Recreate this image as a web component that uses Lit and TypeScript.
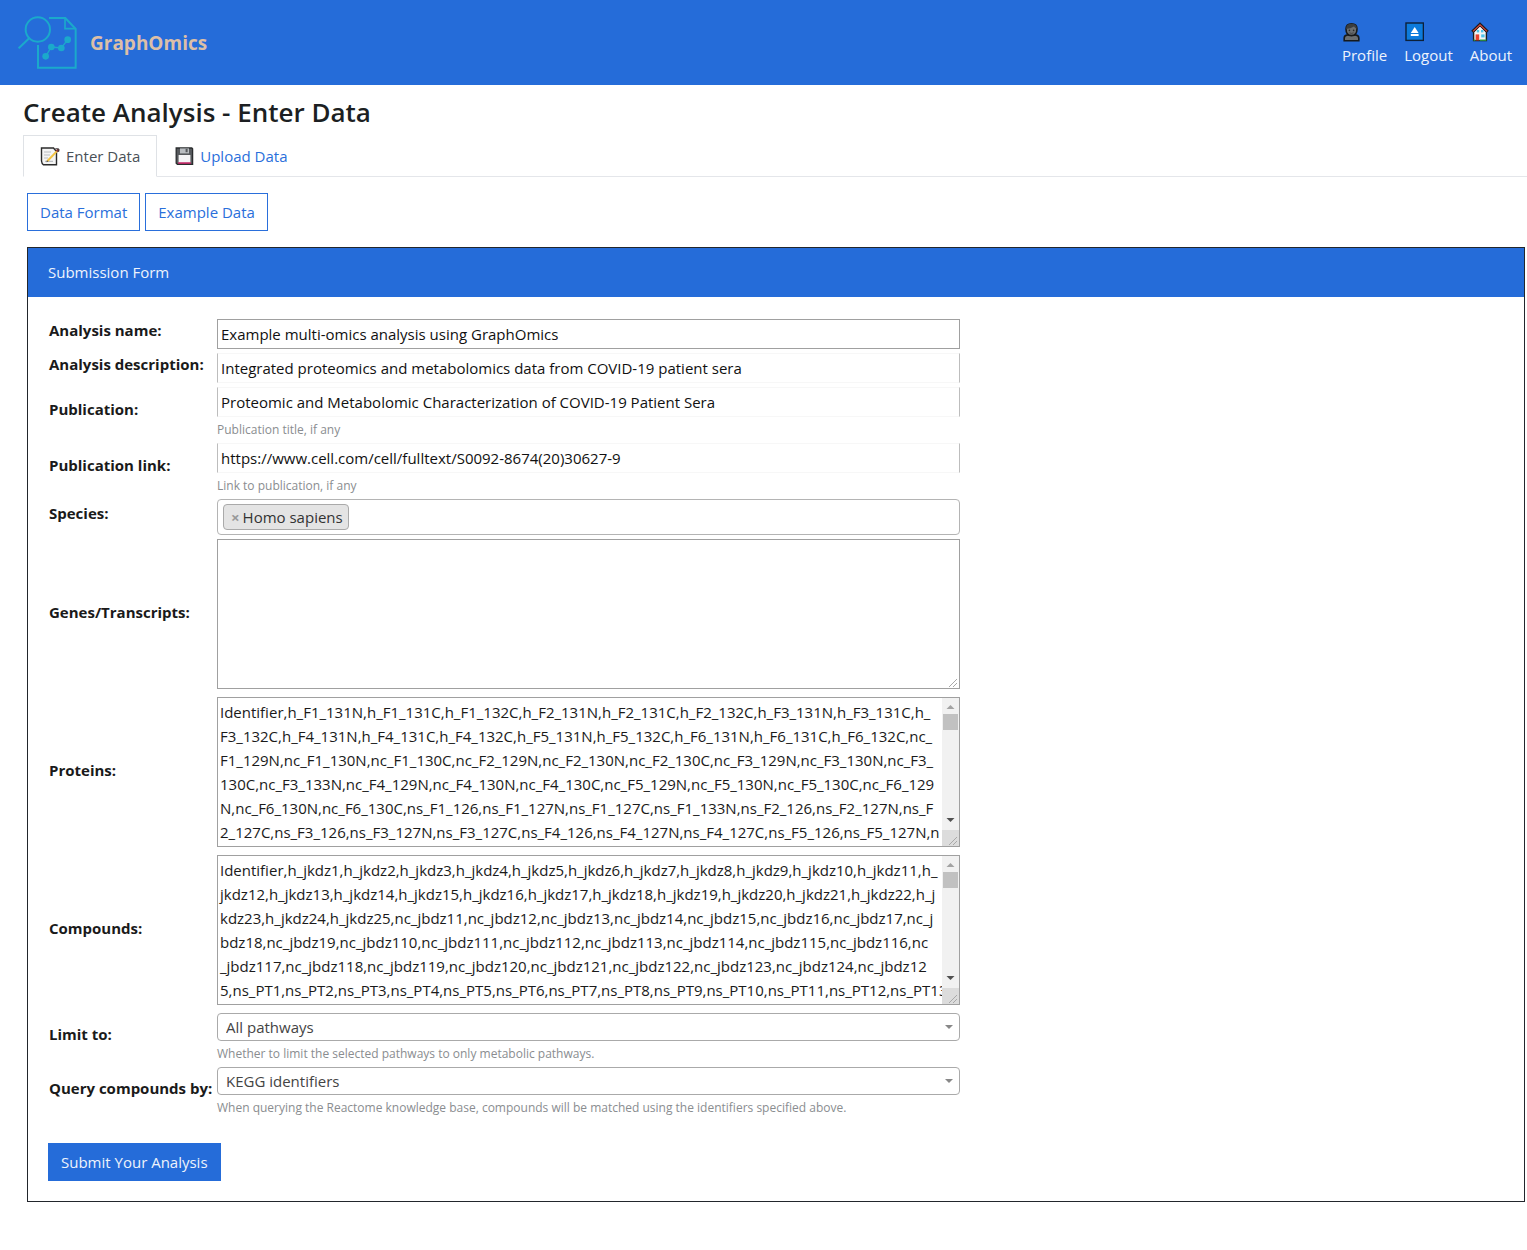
import { LitElement, html, svg, css, nothing } from "lit";
import { customElement, property } from "lit/decorators.js";

const PROTEINS = [
  "Identifier,h_F1_131N,h_F1_131C,h_F1_132C,h_F2_131N,h_F2_131C,h_F2_132C,h_F3_131N,h_F3_131C,h_",
  "F3_132C,h_F4_131N,h_F4_131C,h_F4_132C,h_F5_131N,h_F5_132C,h_F6_131N,h_F6_131C,h_F6_132C,nc_",
  "F1_129N,nc_F1_130N,nc_F1_130C,nc_F2_129N,nc_F2_130N,nc_F2_130C,nc_F3_129N,nc_F3_130N,nc_F3_",
  "130C,nc_F3_133N,nc_F4_129N,nc_F4_130N,nc_F4_130C,nc_F5_129N,nc_F5_130N,nc_F5_130C,nc_F6_129",
  "N,nc_F6_130N,nc_F6_130C,ns_F1_126,ns_F1_127N,ns_F1_127C,ns_F1_133N,ns_F2_126,ns_F2_127N,ns_F",
  "2_127C,ns_F3_126,ns_F3_127N,ns_F3_127C,ns_F4_126,ns_F4_127N,ns_F4_127C,ns_F5_126,ns_F5_127N,n",
].join("\n");

const COMPOUNDS = [
  "Identifier,h_jkdz1,h_jkdz2,h_jkdz3,h_jkdz4,h_jkdz5,h_jkdz6,h_jkdz7,h_jkdz8,h_jkdz9,h_jkdz10,h_jkdz11,h_",
  "jkdz12,h_jkdz13,h_jkdz14,h_jkdz15,h_jkdz16,h_jkdz17,h_jkdz18,h_jkdz19,h_jkdz20,h_jkdz21,h_jkdz22,h_j",
  "kdz23,h_jkdz24,h_jkdz25,nc_jbdz11,nc_jbdz12,nc_jbdz13,nc_jbdz14,nc_jbdz15,nc_jbdz16,nc_jbdz17,nc_j",
  "bdz18,nc_jbdz19,nc_jbdz110,nc_jbdz111,nc_jbdz112,nc_jbdz113,nc_jbdz114,nc_jbdz115,nc_jbdz116,nc",
  "_jbdz117,nc_jbdz118,nc_jbdz119,nc_jbdz120,nc_jbdz121,nc_jbdz122,nc_jbdz123,nc_jbdz124,nc_jbdz12",
  "5,ns_PT1,ns_PT2,ns_PT3,ns_PT4,ns_PT5,ns_PT6,ns_PT7,ns_PT8,ns_PT9,ns_PT10,ns_PT11,ns_PT12,ns_PT13",
].join("\n");

const grip = svg`<path d="M7 15 L15 7 M11 15 L15 11" stroke="#a8a8a8" stroke-width="1" fill="none"/>`;

const icons = {
  profile: html`<svg class="icon" viewBox="0 0 20 20" aria-hidden="true">
    <path d="M2.2 18.8 V16 Q2.200 13.200 5.600 13 H13.400 Q16.800 13.200 16.800 16 V18.800 Z" fill="#6b6e70" stroke="#17191b" stroke-width="1.6"/>
    <path d="M4 7 Q4 1.800 9.500 1.800 Q15 1.800 15 7 Q15 13.600 9.500 13.600 Q4 13.600 4 7 Z" fill="#6b6e70" stroke="#17191b" stroke-width="1.6"/>
    <path d="M4 7 Q4 1.800 9.500 1.800 Q15 1.800 15 7 Q12.800 6 12 4.600 Q8.500 6.800 4 7 Z" fill="#3a3d3f"/>
    <circle cx="7.400" cy="8.400" r="0.8" fill="#2a2a2a"/><circle cx="11.600" cy="8.400" r="0.8" fill="#2a2a2a"/>
    <path d="M7.400 10.800 Q9.500 12 11.600 10.800" stroke="#3c3c3c" stroke-width="0.8" fill="none"/>
  </svg>`,
  logout: html`<svg class="icon" viewBox="0 0 20 20" aria-hidden="true">
    <rect x="2" y="1" width="17.400" height="17.400" fill="#0c7bdc" stroke="#0d2038" stroke-width="1.4"/>
    <path d="M10.700 5 L14.600 11 H6.800 Z" fill="#fff"/><rect x="6.800" y="12" width="7.800" height="2" fill="#fff"/>
  </svg>`,
  home: html`<svg class="icon" viewBox="0 0 20 20" aria-hidden="true">
    <path d="M3.600 18.600 V10 L10 3.600 L16.400 10 V18.600 Z" fill="#f3f5f5" stroke="#1c1c1c" stroke-width="1.4"/>
    <path d="M2.200 9.800 L10 2.200 L17.800 9.800" fill="none" stroke="#1c1c1c" stroke-width="2.800"/>
    <path d="M3 9.400 L10 2.800 L17 9.400" fill="none" stroke="#d8453a" stroke-width="1.3"/>
    <rect x="5.600" y="12.400" width="3.600" height="6" fill="#e8412f"/>
    <rect x="11.200" y="12.400" width="3.400" height="3" fill="#4cc3ea"/>
    <rect x="6.800" y="8" width="2.400" height="2.400" fill="#4cc3ea"/><rect x="11" y="8" width="2.400" height="2.400" fill="#4cc3ea"/>
    <path d="M3.600 18.200 H5.400 M9.600 18.200 H16.400" stroke="#2fa84a" stroke-width="1.2"/>
  </svg>`,
  memo: html`<svg class="icon" viewBox="0 0 20 20" aria-hidden="true">
    <path d="M1.500 2 H13.500 L16.500 5.500 V18.800 H3.500 Q1.800 18 1.500 15 Z" fill="#f4f4f4" stroke="#2b2b2b" stroke-width="1.4"/>
    <path d="M4 6 H11 M4 9 H10 M4 12 H8 M5 15.400 H13" stroke="#b9bcc0" stroke-width="1.1"/>
    <path d="M7.200 15.200 L17.400 4.600" stroke="#f3c343" stroke-width="2"/>
    <path d="M6.400 16.200 L8.400 15.600 L7 14.200 Z" fill="#555"/>
    <path d="M16.600 5.400 L18.600 3.400" stroke="#8b3438" stroke-width="2.400"/>
    <path d="M15.400 2.600 L19 3 L18.600 6" stroke="#2b2b2b" fill="none" stroke-width="0.9"/>
  </svg>`,
  floppy: html`<svg class="icon" viewBox="0 0 20 20" aria-hidden="true">
    <path d="M2.200 2 H17.800 L18.600 2.800 V18.400 H3.400 L2.200 17.200 Z" fill="#56595d" stroke="#2a2c2e" stroke-width="1.3"/>
    <rect x="6" y="2.400" width="9" height="5" fill="#b9bdc1"/><rect x="11.600" y="2.800" width="2" height="3.400" fill="#55585c"/>
    <rect x="4.600" y="9" width="11.800" height="7.600" fill="#f4f4f6"/><rect x="4.200" y="16.400" width="12.600" height="1.300" fill="#e01b6a"/>
  </svg>`,
  logo: html`<svg class="logo" viewBox="54 51 180 159" aria-hidden="true">
    <g fill="none" stroke="#1ba9cb" stroke-width="6">
      <circle cx="113.500" cy="91.500" r="36.500"/>
      <path d="M89 116 L56 148"/>
      <path d="M147 57 H196 L227 90 V206 H114 V138"/>
      <path d="M195 58 V89 H227" stroke-width="5"/>
      <path d="M137 172 L154 144 L184 147 L203 122" stroke-width="4"/>
    </g>
    <g fill="#1ba9cb"><circle cx="137" cy="172" r="10"/><circle cx="154" cy="144" r="10"/><circle cx="184" cy="147" r="10"/><circle cx="203" cy="122" r="10"/></g>
  </svg>`,
};

/** Multi-line data entry box with its scroll rail. */
@customElement("data-area")
export class DataArea extends LitElement {
  @property() value = "";
  @property() label = "";

  static styles = css`
    :host { display: block; }
    .box {
      display: flex;
      height: 150px;
      box-sizing: border-box;
      border: 1px solid #a0a0a0;
      background: #fff;
    }
    textarea {
      flex: 1;
      min-width: 0;
      margin: 0;
      padding: 2px 0 2px 2px;
      border: 0;
      outline: none;
      resize: none;
      overflow: hidden;
      white-space: pre;
      background: transparent;
      color: #1a1a1a;
      font: 15px/24px "Open Sans", "Noto Sans", sans-serif;
    }
    .rail { flex: none; display: flex; flex-direction: column; width: 17px; background: #f1f1f1; }
    .rail svg { display: block; width: 17px; height: 16px; }
    .thumb { height: 16px; margin: 0 1px; background: #c1c1c1; }
    .track { flex: 1; }
    .corner { background: #dcdcdc; }
    .plain { align-self: flex-end; width: 17px; height: 16px; flex: none; }
  `;

  render() {
    return html`<div class="box">
      <textarea aria-label=${this.label} wrap="off" spellcheck="false" .value=${this.value}></textarea>
      ${this.value
        ? html`<div class="rail" aria-hidden="true">
            <svg viewBox="0 0 17 16"><path d="M4.500 11 L8.500 7 L12.500 11 Z" fill="#a3a3a3"/></svg>
            <div class="thumb"></div>
            <div class="track"></div>
            <svg viewBox="0 0 17 16"><path d="M4.500 4 L8.500 8 L12.500 4 Z" fill="#505050"/></svg>
            <svg class="corner" viewBox="0 0 17 16">${grip}</svg>
          </div>`
        : html`<svg class="plain" viewBox="0 0 17 16" aria-hidden="true">${grip}</svg>`}
    </div>`;
  }
}

@customElement("app-root")
export class AppRoot extends LitElement {
  static styles = css`
    :host {
      display: block;
      color: #212529;
      font: 15px/24px "Open Sans", "Noto Sans", sans-serif;
      background: #fff;
    }
    * { box-sizing: border-box; }
    a { color: inherit; text-decoration: none; }
    input, select, button { font: inherit; color: inherit; margin: 0; }
    .icon { display: block; width: 20px; height: 20px; flex: none; }

    .top {
      display: flex;
      align-items: center;
      justify-content: space-between;
      height: 85px;
      padding: 0 15px 0 18px;
      background: #256cd9;
      color: #eef3fc;
    }
    .brand { display: flex; align-items: center; gap: 12px; color: #dcbfa8; font-size: 19px; font-weight: 700; }
    .logo { display: block; width: 60px; height: 53px; }
    nav { display: flex; gap: 17px; padding-top: 4px; }
    nav a { display: grid; gap: 1px; }

    main { padding: 11px 2px 48px 23px; }
    h1 { margin: 0; font-size: 26px; line-height: 32px; font-weight: 600; color: #1c1f22; }
    .tabs { display: flex; margin: 7px -2px 0 0; border-bottom: 1px solid #e4e6ea; }
    .tab {
      display: flex;
      align-items: center;
      gap: 6px;
      height: 42px;
      margin-bottom: -1px;
      padding: 0 16px;
      border: 1px solid transparent;
      color: #2a6fdb;
    }
    .tab.active { border-color: #dfe2e6 #dfe2e6 #fff; background: #fff; color: #495057; }

    .content { padding: 16px 0 0 4px; }
    .helpers { display: flex; gap: 5px; }
    .btn { height: 38px; padding: 0 12px; border: 1px solid #2a6fdb; background: #fff; color: #2a6fdb; }
    .btn.primary { background: #256cd9; border-color: #256cd9; color: #eef3fc; }

    .card { margin-top: 16px; border: 1px solid #22262c; }
    .card h2 {
      margin: 0;
      padding: 12px 20px 13px;
      background: #256cd9;
      color: #eef3fc;
      font-size: 15px;
      line-height: 24px;
      font-weight: 400;
    }
    form { padding: 22px 20px 20px; }
    .fields {
      display: grid;
      grid-template-columns: 169px minmax(0, 743px);
      row-gap: 4px;
      align-items: center;
    }
    .fields > label { padding: 0 0 8px 1px; margin-bottom: -2px; margin-top: -2px; font-weight: 700; white-space: nowrap; color: #1a1a1a; }
    .text { display: block; width: 100%; height: 30px; padding: 1px 3px; border: 1px solid #a0a0a0; border-radius: 0; background: #fff; color: #111; }
    .text.soft { border-color: #f7f7f7 #bdbdbd; }
    .hint { font-size: 12px; line-height: 22px; padding-top: 2px; height: 22px; color: #8a8d90; }
    .area { padding-bottom: 4px; }

    .tags { display: flex; align-items: center; height: 36px; padding: 0 5px; border: 1px solid #b4b4b4; border-radius: 4px; }
    .tag { display: flex; align-items: center; gap: 3px; height: 26px; padding: 0 5px 0 7px; border: 1px solid #aaa; border-radius: 4px; background: #e4e4e4; color: #333; }
    .tag button { padding: 0; border: 0; background: none; color: #999; font-weight: 700; line-height: 20px; }
    .tags input { flex: 1; min-width: 0; border: 0; outline: none; background: none; }

    .pick { display: grid; align-items: center; }
    .pick > * { grid-area: 1 / 1; }
    .pick select { width: 100%; height: 28px; padding: 0 8px; appearance: none; border: 1px solid #aaa; border-radius: 4px; background: #fff; color: #444; }
    .pick svg { justify-self: end; width: 8px; height: 4px; margin-right: 7px; pointer-events: none; }
    .submit { margin-top: 26px; }
  `;

  private text(id: string, label: string, value: string, hint = "", soft = true) {
    return html`<label for=${id}>${label}</label>
      <div>
        <input class="text ${soft ? "soft" : ""}" id=${id} type="text" .value=${value} />
        ${hint ? html`<div class="hint">${hint}</div>` : nothing}
      </div>`;
  }

  private area(id: string, label: string, value = "") {
    return html`<label for=${id}>${label}</label>
      <data-area class="area" id=${id} label=${label} .value=${value}></data-area>`;
  }

  private pick(id: string, label: string, option: string, hint: string) {
    return html`<label for=${id}>${label}</label>
      <div>
        <div class="pick">
          <select id=${id}><option>${option}</option></select>
          <svg viewBox="0 0 8 4" aria-hidden="true"><path d="M0 0 H8 L4 4 Z" fill="#888"/></svg>
        </div>
        <div class="hint">${hint}</div>
      </div>`;
  }

  render() {
    return html`
      <header class="top">
        <a class="brand" href="#">${icons.logo}<span>GraphOmics</span></a>
        <nav>
          <a href="#profile">${icons.profile}<span>Profile</span></a>
          <a href="#logout">${icons.logout}<span>Logout</span></a>
          <a href="#about">${icons.home}<span>About</span></a>
        </nav>
      </header>
      <main>
        <h1>Create Analysis - Enter Data</h1>
        <div class="tabs">
          <a class="tab active" href="#enter">${icons.memo}<span>Enter Data</span></a>
          <a class="tab" href="#upload">${icons.floppy}<span>Upload Data</span></a>
        </div>
        <div class="content">
          <div class="helpers">
            <button class="btn" type="button">Data Format</button>
            <button class="btn" type="button">Example Data</button>
          </div>
          <section class="card">
            <h2>Submission Form</h2>
            <form @submit=${(e: Event) => e.preventDefault()}>
              <div class="fields">
                ${this.text("name", "Analysis name:", "Example multi-omics analysis using GraphOmics", "", false)}
                ${this.text("desc", "Analysis description:", "Integrated proteomics and metabolomics data from COVID-19 patient sera")}
                ${this.text("pub", "Publication:", "Proteomic and Metabolomic Characterization of COVID-19 Patient Sera", "Publication title, if any")}
                ${this.text("link", "Publication link:", "https://www.cell.com/cell/fulltext/S0092-8674(20)30627-9", "Link to publication, if any")}
                <label for="species">Species:</label>
                <div class="tags">
                  <span class="tag"><button type="button" aria-label="Remove">×</button>Homo sapiens</span>
                  <input id="species" type="text" />
                </div>
                ${this.area("genes", "Genes/Transcripts:")}
                ${this.area("proteins", "Proteins:", PROTEINS)}
                ${this.area("compounds", "Compounds:", COMPOUNDS)}
                ${this.pick("limit", "Limit to:", "All pathways", "Whether to limit the selected pathways to only metabolic pathways.")}
                ${this.pick("query", "Query compounds by:", "KEGG identifiers", "When querying the Reactome knowledge base, compounds will be matched using the identifiers specified above.")}
              </div>
              <button class="btn primary submit" type="submit">Submit Your Analysis</button>
            </form>
          </section>
        </div>
      </main>
    `;
  }
}
